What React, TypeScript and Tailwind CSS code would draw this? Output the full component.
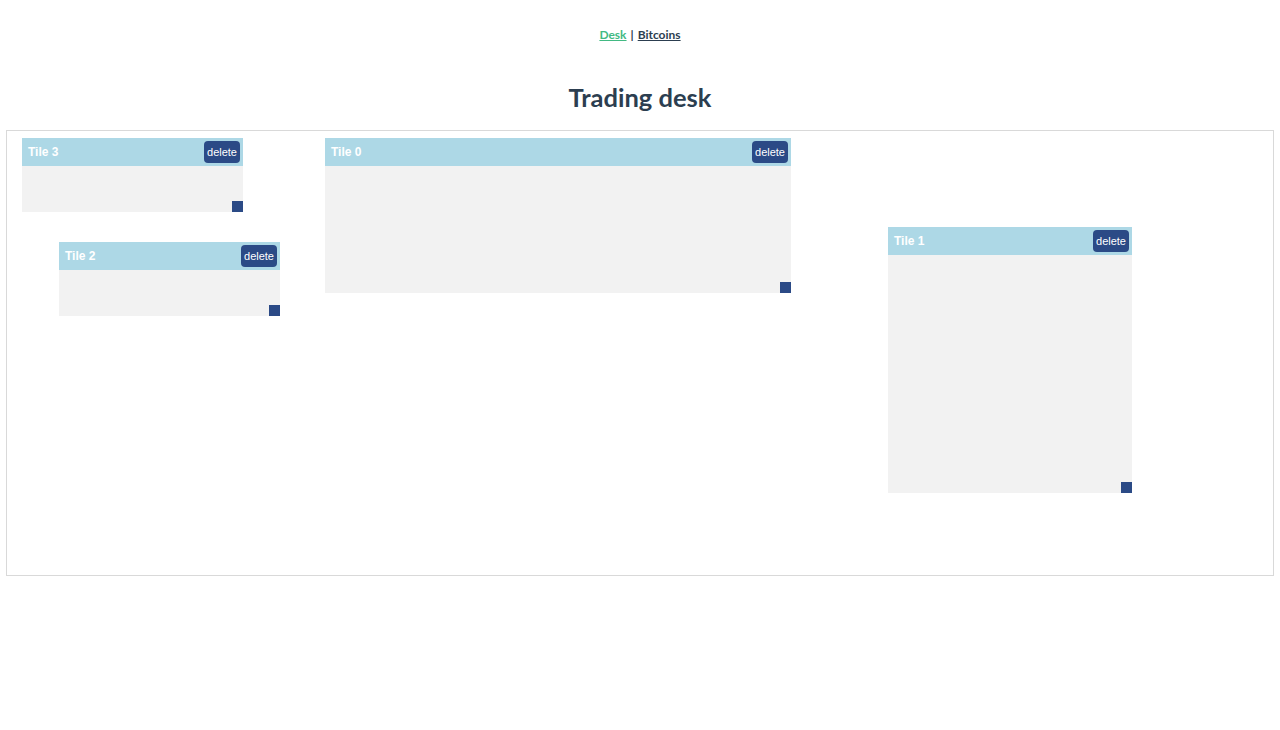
import React from "react";

type Tile = { id: number; left: number; top: number; width: number; height: number };

const tiles: Tile[] = [
  { id: 3, left: 15, top: 7, width: 221, height: 74 },
  { id: 2, left: 52, top: 111, width: 221, height: 74 },
  { id: 0, left: 318, top: 7, width: 466, height: 155 },
  { id: 1, left: 881, top: 96, width: 244, height: 266 },
];

function TileBox({ tile }: { tile: Tile }) {
  return (
    <div
      className="absolute flex flex-col bg-[#f2f2f2]"
      style={{ left: tile.left, top: tile.top, width: tile.width, height: tile.height }}
    >
      <div className="flex h-[28px] items-center justify-between bg-[#add8e6] pl-[6px] pr-[3px]">
        <span className="font-['Liberation_Sans',sans-serif] text-[12px] font-bold text-white">Tile {tile.id}</span>
        <button className="h-[22px] rounded-[4px] bg-[#2b4a86] px-[3px] font-['Liberation_Sans',sans-serif] text-[11px] text-white">
          delete
        </button>
      </div>
      <div className="flex-1" />
      <div className="absolute bottom-0 right-0 h-[11px] w-[11px] bg-[#2b4a86]" />
    </div>
  );
}

export default function App() {
  return (
    <div className="min-h-[730px] bg-white font-['Lato',sans-serif] text-[#2c3e50]">
      <nav className="flex justify-center pt-[27px] text-[12px] leading-[16px] font-bold">
        <a className="text-[#42b983] underline">Desk</a>
        <span className="px-[4px]">|</span>
        <a className="underline">Bitcoins</a>
      </nav>
      <h1 className="mt-[37px] text-center text-[25.5px] font-bold leading-[34px]">Trading desk</h1>
      <div className="relative mx-[6px] mt-[16px] h-[446px] border border-[#d9d9d9]">
        {tiles.map((t) => (
          <TileBox key={t.id} tile={t} />
        ))}
      </div>
    </div>
  );
}
